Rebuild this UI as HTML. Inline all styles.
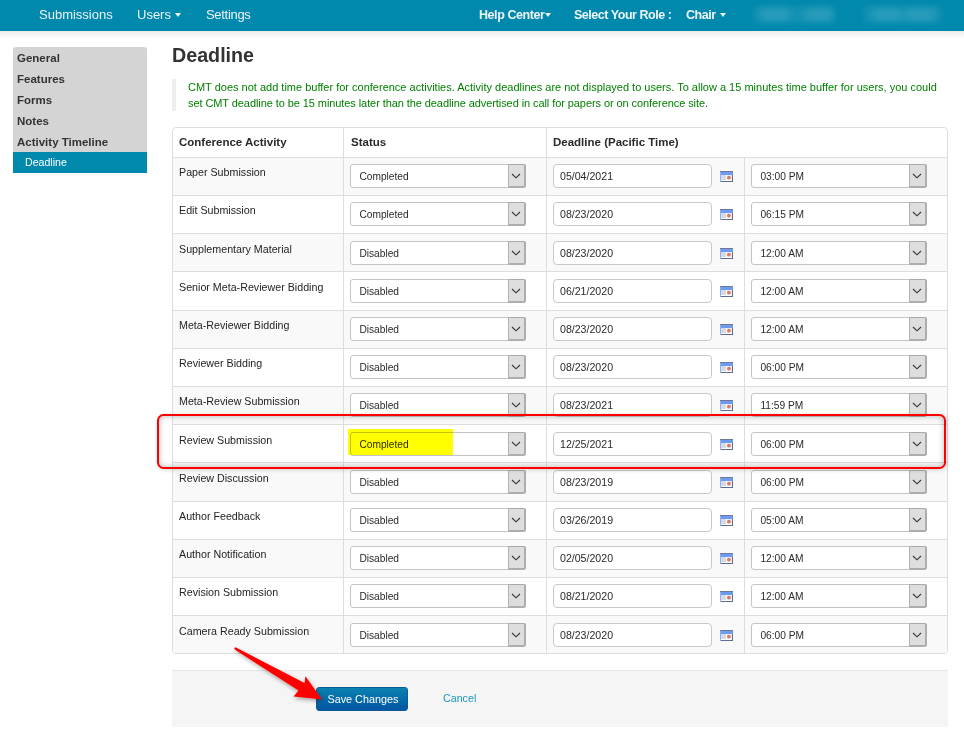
<!DOCTYPE html><html><head><meta charset="utf-8"><style>
*{margin:0;padding:0;box-sizing:border-box}
html,body{width:964px;height:735px;overflow:hidden;background:#fff;font-family:"Liberation Sans",sans-serif;color:#333;position:relative}
.a{position:absolute}
.nav{left:0;top:0;width:964px;height:31px;background:#0089ad}
.navsh{left:0;top:31px;width:964px;height:8px;background:linear-gradient(#ececec,#fff)}
.nt{position:absolute;top:0;line-height:30px;height:30px;color:#eef4f6;font-size:13px;white-space:nowrap}
.nb{font-weight:bold;font-size:12.5px;letter-spacing:-0.43px}
.caret{display:inline-block;width:0;height:0;border-left:3.5px solid transparent;border-right:3.5px solid transparent;border-top:4px solid #eef4f6;vertical-align:middle;margin-left:4px;position:relative;top:-1px}
.blur{position:absolute;background:#5ab5cc;filter:blur(4px);opacity:.45;border-radius:6px}
.side{left:13px;top:47px;width:134px;height:126px;background:#d4d4d4;border-radius:3px 3px 0 0}
.si{position:absolute;left:4px;font-weight:bold;font-size:11.5px;color:#333;white-space:nowrap;line-height:14px}
.act{left:13px;top:152px;width:134px;height:21px;background:#0089ad}
.h1{left:172px;top:44px;font-size:19.7px;font-weight:bold;color:#333;white-space:nowrap}
.bq{left:172px;top:79px;width:4px;height:32px;background:#eeeeee}
.bqt{left:188px;top:79px;font-size:11px;line-height:16px;color:#038003;white-space:nowrap}
.tbl{left:172px;top:127px;width:776px;height:527px;border:1px solid #dddddd;border-radius:4px;background:#fff}
.hl{position:absolute;left:173px;width:774px;height:1px;background:#dddddd}
.vl{position:absolute;width:1px;background:#dddddd}
.stripe{position:absolute;left:173px;width:774px;background:#f9f9f9}
.th{position:absolute;font-weight:bold;font-size:11.5px;white-space:nowrap;color:#2a2a2a;line-height:14px}
.td{position:absolute;font-size:10.7px;white-space:nowrap;color:#242424;line-height:14px}
.sel{position:absolute;width:176px;height:24px;border:1px solid #c4c4c4;border-radius:3px;background:#fff;font-size:10.2px;color:#2a2a2a}
.sel span.t{position:absolute;left:8.4px;top:0.7px;line-height:22px;white-space:nowrap}
.btn{position:absolute;right:-1px;top:-1px;width:18px;height:24px;background:#dedede;border:1px solid #a9a9a9;border-left:1px solid #b0b0b0;border-right:2px solid #adadad;border-bottom:2px solid #adadad;border-radius:0 2px 3px 0}
.btn svg{position:absolute;left:2px;top:8px;display:block}
.inp{position:absolute;width:159px;height:24.3px;border:1px solid #c8c8c8;border-radius:4px;background:#fff;font-size:10.6px;color:#2a2a2a}
.inp span{position:absolute;left:6px;top:0;line-height:23px;white-space:nowrap}
.cal{position:absolute;width:13px;height:11px}
.cal svg{display:block}
.foot{left:172px;top:670px;width:776px;height:57px;background:#f5f5f5;border-top:1px solid #e6e6e6}
.save{left:316px;top:687px;width:92px;height:24px;border-radius:3px;background:linear-gradient(#0a82b0,#0055a2);color:#fff;font-size:10.8px;border:1px solid #0a5c96}
.save span{position:absolute;left:10.5px;top:0;line-height:22px;white-space:nowrap}
.cancel{left:443px;top:691px;font-size:10.7px;color:#1a98c2;white-space:nowrap;line-height:14px}
</style></head><body>
<div class="a nav"></div><div class="a navsh"></div>
<div class="nt" style="left:39px">Submissions</div>
<div class="nt" style="left:137px">Users<span class="caret"></span></div>
<div class="nt" style="left:206px;letter-spacing:-0.3px">Settings</div>
<div class="nt nb" style="left:479px">Help Center<span class="caret" style="margin-left:1px"></span></div>
<div class="nt nb" style="left:574px;letter-spacing:-0.47px">Select Your Role :</div>
<div class="nt nb" style="left:686px">Chair<span class="caret" style="margin-left:4px"></span></div>
<div class="a" style="left:754px;top:6px;width:80px;height:17px;background:rgba(255,255,255,.07);filter:blur(2.5px)"></div>
<div class="a" style="left:864px;top:6px;width:77px;height:17px;background:rgba(255,255,255,.07);filter:blur(2.5px)"></div>
<div class="blur" style="left:760px;top:10px;width:30px;height:9px"></div>
<div class="blur" style="left:805px;top:10px;width:28px;height:9px"></div>
<div class="blur" style="left:872px;top:10px;width:30px;height:9px"></div>
<div class="blur" style="left:905px;top:10px;width:30px;height:9px"></div>
<div class="a side"></div><div class="a act"></div>
<div class="a si" style="left:17px;top:51px">General</div>
<div class="a si" style="left:17px;top:72px">Features</div>
<div class="a si" style="left:17px;top:93px">Forms</div>
<div class="a si" style="left:17px;top:114px">Notes</div>
<div class="a si" style="left:17px;top:135px">Activity Timeline</div>
<div class="a si" style="left:25px;top:155px;color:#fff;font-weight:normal;font-size:10.6px">Deadline</div>
<div class="a h1">Deadline</div>
<div class="a bq"></div>
<div class="a bqt">CMT does not add time buffer for conference activities. Activity deadlines are not displayed to users. To allow a 15 minutes time buffer for users, you could<br><span style="letter-spacing:-0.08px">set CMT deadline to be 15 minutes later than the deadline advertised in call for papers or on conference site.</span></div>
<div class="a tbl"></div>
<div class="stripe" style="top:158px;height:37px"></div>
<div class="stripe" style="top:234px;height:37px"></div>
<div class="stripe" style="top:311px;height:37px"></div>
<div class="stripe" style="top:387px;height:37px"></div>
<div class="stripe" style="top:463px;height:38px"></div>
<div class="stripe" style="top:540px;height:37px"></div>
<div class="stripe" style="top:616px;height:37px;border-radius:0 0 3px 3px"></div>
<div class="hl" style="top:157px"></div>
<div class="hl" style="top:195px"></div>
<div class="hl" style="top:233px"></div>
<div class="hl" style="top:271px"></div>
<div class="hl" style="top:310px"></div>
<div class="hl" style="top:348px"></div>
<div class="hl" style="top:386px"></div>
<div class="hl" style="top:424px"></div>
<div class="hl" style="top:462px"></div>
<div class="hl" style="top:501px"></div>
<div class="hl" style="top:539px"></div>
<div class="hl" style="top:577px"></div>
<div class="hl" style="top:615px"></div>
<div class="vl" style="left:343px;top:128px;height:525px"></div>
<div class="vl" style="left:546px;top:128px;height:525px"></div>
<div class="vl" style="left:744px;top:157px;height:496px"></div>
<div class="th" style="left:179px;top:135px">Conference Activity</div>
<div class="th" style="left:351px;top:135px">Status</div>
<div class="th" style="left:553px;top:135px">Deadline (Pacific Time)</div>
<div class="td" style="left:179px;top:165px">Paper Submission</div>
<div class="sel" style="left:350px;top:164px"><span class="t">Completed</span><div class="btn"><svg width="10" height="6" viewBox="0 0 10 6"><path d="M1 1 L5 4.8 L9 1" fill="none" stroke="#363636" stroke-width="1.15"/></svg></div></div>
<div class="inp" style="left:553px;top:164px"><span>05/04/2021</span></div>
<div class="cal" style="left:720px;top:171px"><svg width="13" height="11" viewBox="0 0 13 11" shape-rendering="crispEdges"><rect x="0" y="0" width="13" height="11" fill="#5f6b90"/><rect x="0" y="0" width="13" height="1" fill="#6f7898"/><rect x="0" y="1" width="1" height="10" fill="#8fb0ee"/><rect x="1" y="1" width="12" height="2.5" fill="#6e9af0"/><rect x="1" y="3.5" width="11" height="6.5" fill="#ffffff"/><rect x="1" y="4" width="4.5" height="5" fill="#d5dae6"/><rect x="6.5" y="4" width="5" height="5" fill="#e6eef8"/><circle cx="8.9" cy="6.6" r="1.9" fill="#e8775a" shape-rendering="auto"/></svg></div>
<div class="sel" style="left:751px;top:164px"><span class="t">03:00 PM</span><div class="btn"><svg width="10" height="6" viewBox="0 0 10 6"><path d="M1 1 L5 4.8 L9 1" fill="none" stroke="#363636" stroke-width="1.15"/></svg></div></div>
<div class="td" style="left:179px;top:203px">Edit Submission</div>
<div class="sel" style="left:350px;top:202px"><span class="t">Completed</span><div class="btn"><svg width="10" height="6" viewBox="0 0 10 6"><path d="M1 1 L5 4.8 L9 1" fill="none" stroke="#363636" stroke-width="1.15"/></svg></div></div>
<div class="inp" style="left:553px;top:202px"><span>08/23/2020</span></div>
<div class="cal" style="left:720px;top:209px"><svg width="13" height="11" viewBox="0 0 13 11" shape-rendering="crispEdges"><rect x="0" y="0" width="13" height="11" fill="#5f6b90"/><rect x="0" y="0" width="13" height="1" fill="#6f7898"/><rect x="0" y="1" width="1" height="10" fill="#8fb0ee"/><rect x="1" y="1" width="12" height="2.5" fill="#6e9af0"/><rect x="1" y="3.5" width="11" height="6.5" fill="#ffffff"/><rect x="1" y="4" width="4.5" height="5" fill="#d5dae6"/><rect x="6.5" y="4" width="5" height="5" fill="#e6eef8"/><circle cx="8.9" cy="6.6" r="1.9" fill="#e8775a" shape-rendering="auto"/></svg></div>
<div class="sel" style="left:751px;top:202px"><span class="t">06:15 PM</span><div class="btn"><svg width="10" height="6" viewBox="0 0 10 6"><path d="M1 1 L5 4.8 L9 1" fill="none" stroke="#363636" stroke-width="1.15"/></svg></div></div>
<div class="td" style="left:179px;top:242px">Supplementary Material</div>
<div class="sel" style="left:350px;top:241px"><span class="t">Disabled</span><div class="btn"><svg width="10" height="6" viewBox="0 0 10 6"><path d="M1 1 L5 4.8 L9 1" fill="none" stroke="#363636" stroke-width="1.15"/></svg></div></div>
<div class="inp" style="left:553px;top:241px"><span>08/23/2020</span></div>
<div class="cal" style="left:720px;top:248px"><svg width="13" height="11" viewBox="0 0 13 11" shape-rendering="crispEdges"><rect x="0" y="0" width="13" height="11" fill="#5f6b90"/><rect x="0" y="0" width="13" height="1" fill="#6f7898"/><rect x="0" y="1" width="1" height="10" fill="#8fb0ee"/><rect x="1" y="1" width="12" height="2.5" fill="#6e9af0"/><rect x="1" y="3.5" width="11" height="6.5" fill="#ffffff"/><rect x="1" y="4" width="4.5" height="5" fill="#d5dae6"/><rect x="6.5" y="4" width="5" height="5" fill="#e6eef8"/><circle cx="8.9" cy="6.6" r="1.9" fill="#e8775a" shape-rendering="auto"/></svg></div>
<div class="sel" style="left:751px;top:241px"><span class="t">12:00 AM</span><div class="btn"><svg width="10" height="6" viewBox="0 0 10 6"><path d="M1 1 L5 4.8 L9 1" fill="none" stroke="#363636" stroke-width="1.15"/></svg></div></div>
<div class="td" style="left:179px;top:280px">Senior Meta-Reviewer Bidding</div>
<div class="sel" style="left:350px;top:279px"><span class="t">Disabled</span><div class="btn"><svg width="10" height="6" viewBox="0 0 10 6"><path d="M1 1 L5 4.8 L9 1" fill="none" stroke="#363636" stroke-width="1.15"/></svg></div></div>
<div class="inp" style="left:553px;top:279px"><span>06/21/2020</span></div>
<div class="cal" style="left:720px;top:286px"><svg width="13" height="11" viewBox="0 0 13 11" shape-rendering="crispEdges"><rect x="0" y="0" width="13" height="11" fill="#5f6b90"/><rect x="0" y="0" width="13" height="1" fill="#6f7898"/><rect x="0" y="1" width="1" height="10" fill="#8fb0ee"/><rect x="1" y="1" width="12" height="2.5" fill="#6e9af0"/><rect x="1" y="3.5" width="11" height="6.5" fill="#ffffff"/><rect x="1" y="4" width="4.5" height="5" fill="#d5dae6"/><rect x="6.5" y="4" width="5" height="5" fill="#e6eef8"/><circle cx="8.9" cy="6.6" r="1.9" fill="#e8775a" shape-rendering="auto"/></svg></div>
<div class="sel" style="left:751px;top:279px"><span class="t">12:00 AM</span><div class="btn"><svg width="10" height="6" viewBox="0 0 10 6"><path d="M1 1 L5 4.8 L9 1" fill="none" stroke="#363636" stroke-width="1.15"/></svg></div></div>
<div class="td" style="left:179px;top:318px">Meta-Reviewer Bidding</div>
<div class="sel" style="left:350px;top:317px"><span class="t">Disabled</span><div class="btn"><svg width="10" height="6" viewBox="0 0 10 6"><path d="M1 1 L5 4.8 L9 1" fill="none" stroke="#363636" stroke-width="1.15"/></svg></div></div>
<div class="inp" style="left:553px;top:317px"><span>08/23/2020</span></div>
<div class="cal" style="left:720px;top:324px"><svg width="13" height="11" viewBox="0 0 13 11" shape-rendering="crispEdges"><rect x="0" y="0" width="13" height="11" fill="#5f6b90"/><rect x="0" y="0" width="13" height="1" fill="#6f7898"/><rect x="0" y="1" width="1" height="10" fill="#8fb0ee"/><rect x="1" y="1" width="12" height="2.5" fill="#6e9af0"/><rect x="1" y="3.5" width="11" height="6.5" fill="#ffffff"/><rect x="1" y="4" width="4.5" height="5" fill="#d5dae6"/><rect x="6.5" y="4" width="5" height="5" fill="#e6eef8"/><circle cx="8.9" cy="6.6" r="1.9" fill="#e8775a" shape-rendering="auto"/></svg></div>
<div class="sel" style="left:751px;top:317px"><span class="t">12:00 AM</span><div class="btn"><svg width="10" height="6" viewBox="0 0 10 6"><path d="M1 1 L5 4.8 L9 1" fill="none" stroke="#363636" stroke-width="1.15"/></svg></div></div>
<div class="td" style="left:179px;top:356px">Reviewer Bidding</div>
<div class="sel" style="left:350px;top:355px"><span class="t">Disabled</span><div class="btn"><svg width="10" height="6" viewBox="0 0 10 6"><path d="M1 1 L5 4.8 L9 1" fill="none" stroke="#363636" stroke-width="1.15"/></svg></div></div>
<div class="inp" style="left:553px;top:355px"><span>08/23/2020</span></div>
<div class="cal" style="left:720px;top:362px"><svg width="13" height="11" viewBox="0 0 13 11" shape-rendering="crispEdges"><rect x="0" y="0" width="13" height="11" fill="#5f6b90"/><rect x="0" y="0" width="13" height="1" fill="#6f7898"/><rect x="0" y="1" width="1" height="10" fill="#8fb0ee"/><rect x="1" y="1" width="12" height="2.5" fill="#6e9af0"/><rect x="1" y="3.5" width="11" height="6.5" fill="#ffffff"/><rect x="1" y="4" width="4.5" height="5" fill="#d5dae6"/><rect x="6.5" y="4" width="5" height="5" fill="#e6eef8"/><circle cx="8.9" cy="6.6" r="1.9" fill="#e8775a" shape-rendering="auto"/></svg></div>
<div class="sel" style="left:751px;top:355px"><span class="t">06:00 PM</span><div class="btn"><svg width="10" height="6" viewBox="0 0 10 6"><path d="M1 1 L5 4.8 L9 1" fill="none" stroke="#363636" stroke-width="1.15"/></svg></div></div>
<div class="td" style="left:179px;top:394px">Meta-Review Submission</div>
<div class="sel" style="left:350px;top:393px"><span class="t">Disabled</span><div class="btn"><svg width="10" height="6" viewBox="0 0 10 6"><path d="M1 1 L5 4.8 L9 1" fill="none" stroke="#363636" stroke-width="1.15"/></svg></div></div>
<div class="inp" style="left:553px;top:393px"><span>08/23/2021</span></div>
<div class="cal" style="left:720px;top:400px"><svg width="13" height="11" viewBox="0 0 13 11" shape-rendering="crispEdges"><rect x="0" y="0" width="13" height="11" fill="#5f6b90"/><rect x="0" y="0" width="13" height="1" fill="#6f7898"/><rect x="0" y="1" width="1" height="10" fill="#8fb0ee"/><rect x="1" y="1" width="12" height="2.5" fill="#6e9af0"/><rect x="1" y="3.5" width="11" height="6.5" fill="#ffffff"/><rect x="1" y="4" width="4.5" height="5" fill="#d5dae6"/><rect x="6.5" y="4" width="5" height="5" fill="#e6eef8"/><circle cx="8.9" cy="6.6" r="1.9" fill="#e8775a" shape-rendering="auto"/></svg></div>
<div class="sel" style="left:751px;top:393px"><span class="t">11:59 PM</span><div class="btn"><svg width="10" height="6" viewBox="0 0 10 6"><path d="M1 1 L5 4.8 L9 1" fill="none" stroke="#363636" stroke-width="1.15"/></svg></div></div>
<div class="td" style="left:179px;top:433px">Review Submission</div>
<div class="sel" style="left:350px;top:432px"><span class="t">Completed</span><div class="btn"><svg width="10" height="6" viewBox="0 0 10 6"><path d="M1 1 L5 4.8 L9 1" fill="none" stroke="#363636" stroke-width="1.15"/></svg></div></div>
<div class="inp" style="left:553px;top:432px"><span>12/25/2021</span></div>
<div class="cal" style="left:720px;top:439px"><svg width="13" height="11" viewBox="0 0 13 11" shape-rendering="crispEdges"><rect x="0" y="0" width="13" height="11" fill="#5f6b90"/><rect x="0" y="0" width="13" height="1" fill="#6f7898"/><rect x="0" y="1" width="1" height="10" fill="#8fb0ee"/><rect x="1" y="1" width="12" height="2.5" fill="#6e9af0"/><rect x="1" y="3.5" width="11" height="6.5" fill="#ffffff"/><rect x="1" y="4" width="4.5" height="5" fill="#d5dae6"/><rect x="6.5" y="4" width="5" height="5" fill="#e6eef8"/><circle cx="8.9" cy="6.6" r="1.9" fill="#e8775a" shape-rendering="auto"/></svg></div>
<div class="sel" style="left:751px;top:432px"><span class="t">06:00 PM</span><div class="btn"><svg width="10" height="6" viewBox="0 0 10 6"><path d="M1 1 L5 4.8 L9 1" fill="none" stroke="#363636" stroke-width="1.15"/></svg></div></div>
<div class="td" style="left:179px;top:471px">Review Discussion</div>
<div class="sel" style="left:350px;top:470px"><span class="t">Disabled</span><div class="btn"><svg width="10" height="6" viewBox="0 0 10 6"><path d="M1 1 L5 4.8 L9 1" fill="none" stroke="#363636" stroke-width="1.15"/></svg></div></div>
<div class="inp" style="left:553px;top:470px"><span>08/23/2019</span></div>
<div class="cal" style="left:720px;top:477px"><svg width="13" height="11" viewBox="0 0 13 11" shape-rendering="crispEdges"><rect x="0" y="0" width="13" height="11" fill="#5f6b90"/><rect x="0" y="0" width="13" height="1" fill="#6f7898"/><rect x="0" y="1" width="1" height="10" fill="#8fb0ee"/><rect x="1" y="1" width="12" height="2.5" fill="#6e9af0"/><rect x="1" y="3.5" width="11" height="6.5" fill="#ffffff"/><rect x="1" y="4" width="4.5" height="5" fill="#d5dae6"/><rect x="6.5" y="4" width="5" height="5" fill="#e6eef8"/><circle cx="8.9" cy="6.6" r="1.9" fill="#e8775a" shape-rendering="auto"/></svg></div>
<div class="sel" style="left:751px;top:470px"><span class="t">06:00 PM</span><div class="btn"><svg width="10" height="6" viewBox="0 0 10 6"><path d="M1 1 L5 4.8 L9 1" fill="none" stroke="#363636" stroke-width="1.15"/></svg></div></div>
<div class="td" style="left:179px;top:509px">Author Feedback</div>
<div class="sel" style="left:350px;top:508px"><span class="t">Disabled</span><div class="btn"><svg width="10" height="6" viewBox="0 0 10 6"><path d="M1 1 L5 4.8 L9 1" fill="none" stroke="#363636" stroke-width="1.15"/></svg></div></div>
<div class="inp" style="left:553px;top:508px"><span>03/26/2019</span></div>
<div class="cal" style="left:720px;top:515px"><svg width="13" height="11" viewBox="0 0 13 11" shape-rendering="crispEdges"><rect x="0" y="0" width="13" height="11" fill="#5f6b90"/><rect x="0" y="0" width="13" height="1" fill="#6f7898"/><rect x="0" y="1" width="1" height="10" fill="#8fb0ee"/><rect x="1" y="1" width="12" height="2.5" fill="#6e9af0"/><rect x="1" y="3.5" width="11" height="6.5" fill="#ffffff"/><rect x="1" y="4" width="4.5" height="5" fill="#d5dae6"/><rect x="6.5" y="4" width="5" height="5" fill="#e6eef8"/><circle cx="8.9" cy="6.6" r="1.9" fill="#e8775a" shape-rendering="auto"/></svg></div>
<div class="sel" style="left:751px;top:508px"><span class="t">05:00 AM</span><div class="btn"><svg width="10" height="6" viewBox="0 0 10 6"><path d="M1 1 L5 4.8 L9 1" fill="none" stroke="#363636" stroke-width="1.15"/></svg></div></div>
<div class="td" style="left:179px;top:547px">Author Notification</div>
<div class="sel" style="left:350px;top:546px"><span class="t">Disabled</span><div class="btn"><svg width="10" height="6" viewBox="0 0 10 6"><path d="M1 1 L5 4.8 L9 1" fill="none" stroke="#363636" stroke-width="1.15"/></svg></div></div>
<div class="inp" style="left:553px;top:546px"><span>02/05/2020</span></div>
<div class="cal" style="left:720px;top:553px"><svg width="13" height="11" viewBox="0 0 13 11" shape-rendering="crispEdges"><rect x="0" y="0" width="13" height="11" fill="#5f6b90"/><rect x="0" y="0" width="13" height="1" fill="#6f7898"/><rect x="0" y="1" width="1" height="10" fill="#8fb0ee"/><rect x="1" y="1" width="12" height="2.5" fill="#6e9af0"/><rect x="1" y="3.5" width="11" height="6.5" fill="#ffffff"/><rect x="1" y="4" width="4.5" height="5" fill="#d5dae6"/><rect x="6.5" y="4" width="5" height="5" fill="#e6eef8"/><circle cx="8.9" cy="6.6" r="1.9" fill="#e8775a" shape-rendering="auto"/></svg></div>
<div class="sel" style="left:751px;top:546px"><span class="t">12:00 AM</span><div class="btn"><svg width="10" height="6" viewBox="0 0 10 6"><path d="M1 1 L5 4.8 L9 1" fill="none" stroke="#363636" stroke-width="1.15"/></svg></div></div>
<div class="td" style="left:179px;top:585px">Revision Submission</div>
<div class="sel" style="left:350px;top:584px"><span class="t">Disabled</span><div class="btn"><svg width="10" height="6" viewBox="0 0 10 6"><path d="M1 1 L5 4.8 L9 1" fill="none" stroke="#363636" stroke-width="1.15"/></svg></div></div>
<div class="inp" style="left:553px;top:584px"><span>08/21/2020</span></div>
<div class="cal" style="left:720px;top:591px"><svg width="13" height="11" viewBox="0 0 13 11" shape-rendering="crispEdges"><rect x="0" y="0" width="13" height="11" fill="#5f6b90"/><rect x="0" y="0" width="13" height="1" fill="#6f7898"/><rect x="0" y="1" width="1" height="10" fill="#8fb0ee"/><rect x="1" y="1" width="12" height="2.5" fill="#6e9af0"/><rect x="1" y="3.5" width="11" height="6.5" fill="#ffffff"/><rect x="1" y="4" width="4.5" height="5" fill="#d5dae6"/><rect x="6.5" y="4" width="5" height="5" fill="#e6eef8"/><circle cx="8.9" cy="6.6" r="1.9" fill="#e8775a" shape-rendering="auto"/></svg></div>
<div class="sel" style="left:751px;top:584px"><span class="t">12:00 AM</span><div class="btn"><svg width="10" height="6" viewBox="0 0 10 6"><path d="M1 1 L5 4.8 L9 1" fill="none" stroke="#363636" stroke-width="1.15"/></svg></div></div>
<div class="td" style="left:179px;top:624px">Camera Ready Submission</div>
<div class="sel" style="left:350px;top:623px"><span class="t">Disabled</span><div class="btn"><svg width="10" height="6" viewBox="0 0 10 6"><path d="M1 1 L5 4.8 L9 1" fill="none" stroke="#363636" stroke-width="1.15"/></svg></div></div>
<div class="inp" style="left:553px;top:623px"><span>08/23/2020</span></div>
<div class="cal" style="left:720px;top:630px"><svg width="13" height="11" viewBox="0 0 13 11" shape-rendering="crispEdges"><rect x="0" y="0" width="13" height="11" fill="#5f6b90"/><rect x="0" y="0" width="13" height="1" fill="#6f7898"/><rect x="0" y="1" width="1" height="10" fill="#8fb0ee"/><rect x="1" y="1" width="12" height="2.5" fill="#6e9af0"/><rect x="1" y="3.5" width="11" height="6.5" fill="#ffffff"/><rect x="1" y="4" width="4.5" height="5" fill="#d5dae6"/><rect x="6.5" y="4" width="5" height="5" fill="#e6eef8"/><circle cx="8.9" cy="6.6" r="1.9" fill="#e8775a" shape-rendering="auto"/></svg></div>
<div class="sel" style="left:751px;top:623px"><span class="t">06:00 PM</span><div class="btn"><svg width="10" height="6" viewBox="0 0 10 6"><path d="M1 1 L5 4.8 L9 1" fill="none" stroke="#363636" stroke-width="1.15"/></svg></div></div>
<div class="a" style="left:348px;top:429px;width:105px;height:26px;background:#ffff00;mix-blend-mode:multiply"></div>
<div class="a foot"></div>
<div class="a save"><span>Save Changes</span></div>
<div class="a cancel">Cancel</div>
<div class="a" style="left:157.2px;top:414.4px;width:788.5px;height:54.7px;border:2.1px solid #ff0000;border-radius:6.5px;box-shadow:inset 0 0 6px rgba(0,0,0,.28), 1px 1px 4px rgba(0,0,0,.16)"></div>
<svg class="a" style="left:0;top:0" width="964" height="735"><defs><filter id="sh" x="-20%" y="-20%" width="140%" height="140%"><feGaussianBlur in="SourceAlpha" stdDeviation="2"/><feOffset dx="1" dy="2"/><feComponentTransfer><feFuncA type="linear" slope="0.35"/></feComponentTransfer><feMerge><feMergeNode/><feMergeNode in="SourceGraphic"/></feMerge></filter></defs><path d="M234.2 647.8 Q234.3 649.6 235.8 650.2 L298.5 690.5 L293.5 696.5 L322 699.4 L305.5 676.3 L304.5 683 L236 647.6 Q235 647.2 234.2 647.8 Z" fill="#ff0000" filter="url(#sh)"/></svg>
</body></html>
